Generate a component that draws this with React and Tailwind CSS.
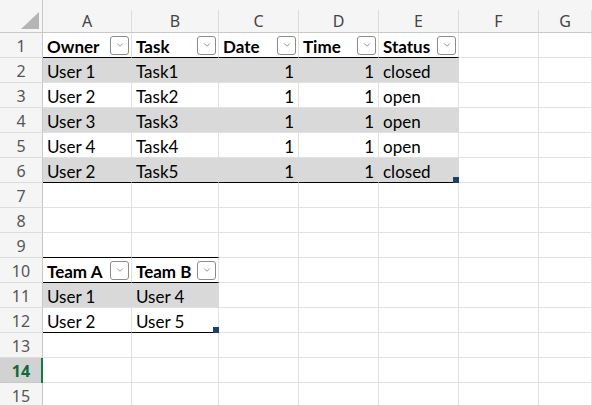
import { ChevronDown } from "lucide-react"

const cols = ["A", "B", "C", "D", "E", "F", "G"]

// row -> { colIndex: cell }
const sheet = {
  1: [
    { t: "Owner", b: true, dd: true, line: true },
    { t: "Task", b: true, dd: true, line: true },
    { t: "Date", b: true, dd: true, line: true },
    { t: "Time", b: true, dd: true, line: true },
    { t: "Status", b: true, dd: true, line: true },
  ],
  2: [
    { t: "User 1", fill: true },
    { t: "Task1", fill: true },
    { t: "1", r: true, fill: true },
    { t: "1", r: true, fill: true },
    { t: "closed", fill: true },
  ],
  3: [{ t: "User 2" }, { t: "Task2" }, { t: "1", r: true }, { t: "1", r: true }, { t: "open" }],
  4: [
    { t: "User 3", fill: true },
    { t: "Task3", fill: true },
    { t: "1", r: true, fill: true },
    { t: "1", r: true, fill: true },
    { t: "open", fill: true },
  ],
  5: [{ t: "User 4" }, { t: "Task4" }, { t: "1", r: true }, { t: "1", r: true }, { t: "open" }],
  6: [
    { t: "User 2", fill: true, line: true },
    { t: "Task5", fill: true, line: true },
    { t: "1", r: true, fill: true, line: true },
    { t: "1", r: true, fill: true, line: true },
    { t: "closed", fill: true, line: true, handle: true },
  ],
  9: [{ line: true }, { line: true }],
  10: [
    { t: "Team A", b: true, dd: true, line: true },
    { t: "Team B", b: true, dd: true, line: true },
  ],
  11: [
    { t: "User 1", fill: true },
    { t: "User 4", fill: true },
  ],
  12: [
    { t: "User 2", line: true },
    { t: "User 5", line: true, handle: true },
  ],
}

function Dropdown() {
  return (
    <div className="ml-auto w-[19px] h-[19px] shrink-0 rounded-[3px] border border-[#8c8c8c] bg-white flex items-center justify-center">
      <ChevronDown className="w-[10px] h-[10px] text-[#555]" strokeWidth={1.5} />
    </div>
  )
}

function Cell({ c = {} }) {
  const fill = c.fill ? "bg-[#d9d9d9] border-r-[#d9d9d9]" : "bg-white border-r-[#e1e1e1]"
  const bottom = c.line ? "border-b-black" : "border-b-[#e1e1e1]"
  return (
    <div className={`relative h-[25px] border-r border-b ${fill} ${bottom} flex items-center pl-[4px] pr-[2px]`}>
      <span className={`whitespace-nowrap text-black pt-[3px] ${c.b ? "font-bold" : ""} ${c.r ? "ml-auto pr-[2px]" : ""}`}>
        {c.t}
      </span>
      {c.dd && <Dropdown />}
      {c.handle && <div className="absolute right-[-1px] bottom-[-1px] w-[6px] h-[6px] bg-[#1d4166]" />}
    </div>
  )
}

export default function App() {
  const rows = Array.from({ length: 15 }, (_, i) => i + 1)
  return (
    <div
      className="w-[592px] h-[405px] overflow-hidden bg-white text-[17px] leading-none"
      style={{ fontFamily: "Lato, 'Liberation Sans', sans-serif" }}
    >
      <div className="grid grid-cols-[43px_89px_87px_80px_80px_80px_80px_53px]">
        {/* corner */}
        <div className="h-[33px] bg-[#f5f5f5] border-b border-r border-b-[#c8c8c8] border-r-[#c8c8c8] flex items-end justify-end pr-[3px] pb-[3px]">
          <svg width="18" height="17" viewBox="0 0 18 17">
            <polygon points="0,17 18,17 18,0" fill="#b5b5b5" />
          </svg>
        </div>
        {cols.map((l) => (
          <div key={l} className="h-[33px] bg-[#f5f5f5] border-b border-b-[#c8c8c8] pt-[10px]">
            <div
              className="h-[22px] border-r border-r-[#dcdcdc] flex items-center justify-center text-[16px] text-[#444]"
              style={{ fontFamily: "'Noto Sans', sans-serif" }}
            >
              {l}
            </div>
          </div>
        ))}

        {rows.map((r) => {
          const sel = r === 14
          const data = sheet[r] || []
          return [
            <div
              key={`h${r}`}
              className={`relative h-[25px] border-b border-r flex items-center justify-center pt-[2px] text-[16px] ${
                sel
                  ? "bg-[#d2d2d2] border-b-[#c8c8c8] border-r-[#c8c8c8] text-[#0e6b38] font-bold"
                  : "bg-[#f5f5f5] border-b-[#dcdcdc] border-r-[#c8c8c8] text-[#555]"
              }`}
              style={{ fontFamily: "'Noto Sans', sans-serif" }}
            >
              {r}
              {sel && <div className="absolute right-[-1px] top-0 bottom-[-1px] w-[2px] bg-[#107c41]" />}
            </div>,
            ...cols.map((l, ci) => <Cell key={`${r}${l}`} c={data[ci]} />),
          ]
        })}
      </div>
    </div>
  )
}
